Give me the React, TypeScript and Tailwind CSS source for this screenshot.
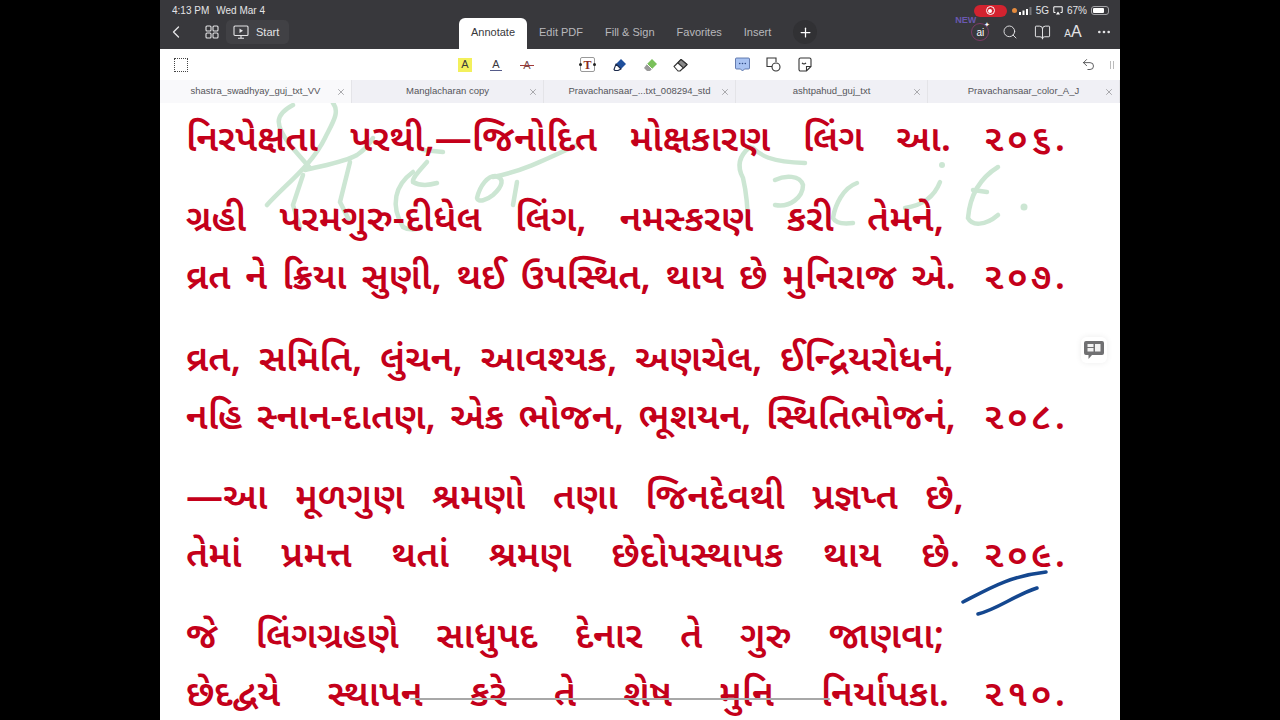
import { ChevronLeft, Plus, Search, BookOpen, MoreHorizontal, Undo2, X } from 'lucide-react'

const tabs = ['shastra_swadhyay_guj_txt_VV', 'Manglacharan copy', 'Pravachansaar_...txt_008294_std', 'ashtpahud_guj_txt', 'Pravachansaar_color_A_J']

const lines = [
  { words: ['નિરપેક્ષતા', 'પરથી,—જિનોદિત', 'મોક્ષકારણ', 'લિંગ', 'આ.'], num: '૨૦૬.', w: 'w-[765px]', mt: 'mt-0' },
  { words: ['ગ્રહી', 'પરમગુરુ-દીધેલ', 'લિંગ,', 'નમસ્કરણ', 'કરી', 'તેમને,'], num: '', w: 'w-[758px]', mt: 'mt-[34px]' },
  { words: ['વ્રત', 'ને', 'ક્રિયા', 'સુણી,', 'થઈ', 'ઉપસ્થિત,', 'થાય', 'છે', 'મુનિરાજ', 'એ.'], num: '૨૦૭.', w: 'w-[770px]', mt: 'mt-[12px]' },
  { words: ['વ્રત,', 'સમિતિ,', 'લુંચન,', 'આવશ્યક,', 'અણચેલ,', 'ઈન્દ્રિયરોધનં,'], num: '', w: 'w-[768px]', mt: 'mt-[36px]' },
  { words: ['નહિ', 'સ્નાન-દાતણ,', 'એક', 'ભોજન,', 'ભૂશયન,', 'સ્થિતિભોજનં,'], num: '૨૦૮.', w: 'w-[770px]', mt: 'mt-[12px]' },
  { words: ['—આ', 'મૂળગુણ', 'શ્રમણો', 'તણા', 'જિનદેવથી', 'પ્રજ્ઞપ્ત', 'છે,'], num: '', w: 'w-[778px]', mt: 'mt-[34px]' },
  { words: ['તેમાં', 'પ્રમત્ત', 'થતાં', 'શ્રમણ', 'છેદોપસ્થાપક', 'થાય', 'છે.'], num: '૨૦૯.', w: 'w-[774px]', mt: 'mt-[12px]' },
  { words: ['જે', 'લિંગગ્રહણે', 'સાધુપદ', 'દેનાર', 'તે', 'ગુરુ', 'જાણવા;'], num: '', w: 'w-[758px]', mt: 'mt-[35px]' },
  { words: ['છેદદ્વયે', 'સ્થાપન', 'કરે', 'તે', 'શેષ', 'મુનિ', 'નિર્યાપકા.'], num: '૨૧૦.', w: 'w-[763px]', mt: 'mt-[12px]' },
]

const App = () => {
  return (
    <div className="flex h-[720px] w-full justify-center overflow-hidden bg-black font-['Liberation_Sans',sans-serif]">
      <div className="relative flex h-full w-[960px] flex-col bg-white">
        {/* dark app header */}
        <div className="relative h-[49px] shrink-0 bg-[#38383c] text-[#e4e4e6]">
          <div className="flex h-[21px] items-center justify-between pl-[12px] pr-[11px] text-[10px]">
            <div className="flex gap-[7px]"><span>4:13 PM</span><span>Wed Mar 4</span></div>
            <div className="flex items-center gap-[4px]">
              <div className="flex h-[12px] w-[33px] items-center justify-center rounded-full bg-[#d2232f]">
                <div className="flex h-[9px] w-[9px] items-center justify-center rounded-full border border-white"><div className="h-[4px] w-[4px] rounded-full bg-white" /></div>
              </div>
              <div className="ml-[1px] -mr-[2px] h-[5px] w-[5px] rounded-full bg-[#e58b3e]" />
              <svg width="13" height="8" viewBox="0 0 13 8" fill="white"><rect x="0" y="5" width="2" height="3" /><rect x="3.5" y="3.5" width="2" height="4.5" /><rect x="7" y="2" width="2" height="6" /><rect x="10.5" y="0" width="2" height="8" fill="#77777b" /></svg>
              <span>5G</span>
              <svg width="10" height="9" viewBox="0 0 10 9" fill="none" stroke="white"><path d="M2.5 6.5H.8V.8h8.4v5.7H7.5" /><path d="M5 5.5 7 8.5H3z" fill="white" stroke="none" /></svg>
              <span>67%</span>
              <div className="flex h-[9px] w-[18px] items-center rounded-[3px] border border-[#a4a4a8] p-[1px]"><div className="h-full w-[11px] rounded-[1px] bg-white" /></div>
            </div>
          </div>
          <div className="flex h-[28px] items-center pb-[6px] pl-[6px] text-[11px]">
            <ChevronLeft size={20} strokeWidth={1.6} />
            <svg className="ml-[18px]" width="16" height="16" viewBox="0 0 16 16" fill="none" stroke="currentColor" strokeWidth="1.1">
              <rect x="2" y="2" width="5" height="5" rx="1" /><rect x="9" y="2" width="5" height="5" rx="1" /><rect x="2" y="9" width="5" height="5" rx="1" /><rect x="9" y="9" width="5" height="5" rx="1" />
            </svg>
            <div className="ml-[6px] flex h-[24px] w-[63px] items-center gap-[7px] rounded-[5px] bg-[#414145] pl-[7px]">
              <svg width="16" height="16" viewBox="0 0 16 16" fill="none" stroke="currentColor" strokeWidth="1.1">
                <rect x="1" y="2" width="14" height="9.5" rx="1" /><path d="M8 11.5V14M5 14.3h6" /><path d="M6.5 4.5 10 6.7 6.5 9z" fill="currentColor" stroke="none" />
              </svg>
              <span>Start</span>
            </div>
            <div className="ml-[170px] -mb-[6px] flex h-[31px] w-[68px] items-center justify-center self-end rounded-t-[6px] bg-white pb-[3px] text-[#38383c]">Annotate</div>
            <div className="ml-[12px] flex gap-[22px] text-[#b9b9bc]"><span>Edit PDF</span><span>Fill &amp; Sign</span><span>Favorites</span><span>Insert</span></div>
            <div className="ml-[22px] flex h-[24px] w-[24px] items-center justify-center rounded-full bg-[#313134]"><Plus size={15} strokeWidth={2} color="white" /></div>
            <div className="relative ml-[154px] flex h-[18px] w-[18px] items-center justify-center rounded-full border border-[#7d3a66] text-[10px] text-white">ai
              <span className="absolute -left-[17px] -top-[10px] text-[9px] font-bold text-[#6a58b0]">NEW</span>
              <span className="absolute -right-[2px] -top-[3px] text-[7px] leading-[8px] text-white">✦</span>
            </div>
            <Search size={16} strokeWidth={1.4} className="ml-[13px]" />
            <BookOpen size={17} strokeWidth={1.4} className="ml-[16px]" />
            <span className="ml-[13px] text-[16px]"><span className="text-[10px]">A</span>A</span>
            <MoreHorizontal size={16} className="ml-[14px]" />
          </div>
        </div>

        {/* annotate tools */}
        <div className="relative flex h-[31px] shrink-0 items-center bg-white pl-[14px] text-[#3a3a3c]">
          <div className="h-[14px] w-[14px] border border-dotted border-[#444]" />
          <div className="ml-[270px] flex h-[14px] w-[14px] items-center justify-center bg-[#f3f05c] text-[11px]">A</div>
          <div className="ml-[17px] flex w-[14px] justify-center"><span className="border-b border-[#555b8a] px-[2px] text-[11px] leading-[12px]">A</span></div>
          <div className="relative ml-[17px] flex w-[14px] justify-center text-[11px] leading-[12px] text-[#7a4a4a]">
            A<div className="absolute left-0 top-[6px] h-px w-full bg-[#a03a3a]" />
          </div>
          <div className="relative ml-[46px] flex h-[15px] w-[15px] items-center justify-center rounded-[2px] border border-[#999] font-['Liberation_Serif',serif] text-[12px] font-bold text-[#8c2a22]">T
            <div className="absolute -left-[2px] top-[5px] h-[3px] w-[3px] rounded-full bg-[#222]" />
            <div className="absolute -right-[2px] top-[5px] h-[3px] w-[3px] rounded-full bg-[#222]" />
          </div>
          <svg className="ml-[18px]" width="14" height="14" viewBox="0 0 14 14"><path d="M3 6 8 1l5 5-5 5z" fill="#1f4f9c" /><path d="M3 6l5 5-3 1.5H2L1 11.5z" fill="#fff" stroke="#1c2a4a" strokeWidth="1.1" strokeLinejoin="round" /></svg>
          <svg className="ml-[16px]" width="15" height="14" viewBox="0 0 15 14"><path d="M4 6 9 1l5 5-5 5z" fill="#79c05a" /><path d="M4 6l5 5-2 2H4L1 10z" fill="#9a9a9a" /><path d="M4 6l5 5" stroke="#fff" strokeWidth="1" /></svg>
          <svg className="ml-[15px]" width="15" height="14" viewBox="0 0 15 14" stroke="#333" strokeWidth="1.1" strokeLinejoin="round"><path d="M1 8.5 8 1.5l6 5-7 6.5H5z" fill="#fff" /><path d="M5 5 8 1.5l6 5-3.5 3.5z" fill="#8a8a8a" /></svg>
          <svg className="ml-[47px]" width="15" height="15" viewBox="0 0 15 15"><path d="M1.5 1h12a1 1 0 0 1 1 1v9a1 1 0 0 1-1 1H9.5l-2 2-2-2h-4a1 1 0 0 1-1-1V2a1 1 0 0 1 1-1z" fill="#a9c3f2" stroke="#47629c" strokeWidth=".8" /><circle cx="4.7" cy="6.5" r=".8" fill="#2f4b86" /><circle cx="7.5" cy="6.5" r=".8" fill="#2f4b86" /><circle cx="10.3" cy="6.5" r=".8" fill="#2f4b86" /></svg>
          <svg className="ml-[16px]" width="15" height="15" viewBox="0 0 15 15" fill="none" stroke="#333" strokeWidth="1.1"><path d="M6 9.5H1V1h9v4" /><circle cx="10" cy="10" r="4" fill="white" /></svg>
          <svg className="ml-[17px]" width="14" height="15" viewBox="0 0 14 15" fill="none" stroke="#333" strokeWidth="1.1"><path d="M8.5 14H2.5A1.5 1.5 0 0 1 1 12.5v-10A1.5 1.5 0 0 1 2.5 1h9A1.5 1.5 0 0 1 13 2.5V9.5zM8.5 14V9.5H13" /><path d="M4 6q2 2 4 0" /></svg>
          <Undo2 size={15} strokeWidth={1.3} className="ml-[269px]" />
          <div className="ml-[14px] flex gap-[2px]"><div className="h-[8px] w-px bg-[#bbb]" /><div className="h-[8px] w-px bg-[#bbb]" /></div>
        </div>

        {/* open documents */}
        <div className="flex h-[23px] shrink-0 bg-[#f0f0f5] text-[9.5px] text-[#55555a]">
          {tabs.map((t, i) => (
            <div key={t} className={`relative flex w-[192px] items-center justify-center border-r border-[#e4e4e8] ${i === 0 ? 'bg-[#f9f9fb]' : ''}`}>
              <span>{t}</span>
              <X size={10} className="absolute right-[5px] text-[#9a9a9e]" />
            </div>
          ))}
        </div>

        {/* pdf page */}
        <div className="relative flex-1 overflow-hidden pl-[26px] pr-[52px] pt-[16px] font-['Noto_Sans_Gujarati','Noto_Sans',sans-serif] text-[37px] font-semibold leading-[46px] text-[#c4001a]">
          {/* signature watermark, coordinates are the full screenshot's */}
          <svg className="absolute left-0 top-0 h-[140px] w-[960px]" viewBox="160 103 960 140" fill="none" stroke="#cce6d3" strokeWidth="4.5" strokeLinecap="round">
            <path d="M267 205C285 185 312 165 325 138 333 122 340 112 333 103" />
            <path d="M293 105C274 115 275 125 290 145L310 168" />
            <path d="M305 170C325 165 345 162 357 155 363 151 370 143 373 138" />
            <path d="M303 175 293 205 300 228" />
            <path d="M350 162 340 202 350 222" />
            <path d="M413 172C395 185 390 205 403 227 408 230 415 230 420 228" />
            <path d="M427 162C420 170 412 178 413 182 420 186 430 185 437 183" />
            <path d="M423 150 443 152" />
            <path d="M477 198C480 185 488 176 495 176 505 178 503 186 493 195 487 200 478 203 477 198" />
            <path d="M493 177C520 172 545 160 577 145" />
            <path d="M517 182 513 205" />
            <path d="M750 147C740 155 736 165 743 178 747 195 748 215 748 228" />
            <path d="M753 148C760 155 770 162 805 163" />
            <path d="M775 180C785 175 800 175 803 185 803 197 790 208 775 205" />
            <path d="M857 183C843 188 835 205 833 218 836 224 845 224 853 223" />
            <path d="M940 182C935 195 925 205 905 208" />
            <path d="M998 167C980 178 970 195 968 218 972 226 985 226 998 215" />
            <path d="M973 190 987 192" />
            <circle cx="942" cy="165" r="3" fill="#cce6d3" stroke="none" />
            <circle cx="1024" cy="207" r="3.5" fill="#cce6d3" stroke="none" />
          </svg>
          <div className="relative">
            {lines.map((l, i) => (
              <div key={i} className={`flex justify-between whitespace-nowrap ${l.mt}`}>
                <div className={`flex justify-between ${l.w}`}>
                  {l.words.map((w, j) => <span key={j}>{w}</span>)}
                </div>
                {l.num && <span className="tracking-[3px]">{l.num}</span>}
              </div>
            ))}
          </div>
          {/* pen strokes */}
          <svg className="absolute left-[800px] top-[465px] h-[50px] w-[90px]" viewBox="0 0 90 50" fill="none" stroke="#14478f" strokeWidth="3.5" strokeLinecap="round">
            <path d="M3 34C30 20 50 8 86 4" />
            <path d="M18 46c20-5 35-18 59-26" />
          </svg>
          <div className="absolute left-[250px] top-[595px] h-[2px] w-[420px] rounded-full bg-[#a8a8a8]" />
          <div className="absolute left-[921px] top-[234px] flex h-[26px] w-[26px] items-center justify-center rounded-[6px] bg-white/80 shadow-[0_0_6px_rgba(0,0,0,0.08)]">
            <svg width="22" height="20" viewBox="0 0 22 20">
              <path d="M3 1h16a2 2 0 0 1 2 2v10a2 2 0 0 1-2 2H9l-3.5 4V15H3a2 2 0 0 1-2-2V3a2 2 0 0 1 2-2z" fill="#707072" />
              <rect x="4.5" y="4" width="6" height="3" fill="#f2f2f2" /><rect x="4.5" y="8" width="6" height="3.5" fill="#f2f2f2" /><rect x="12" y="4" width="5.5" height="7.5" fill="#f2f2f2" />
            </svg>
          </div>
        </div>
      </div>
    </div>
  )
}

export default App
